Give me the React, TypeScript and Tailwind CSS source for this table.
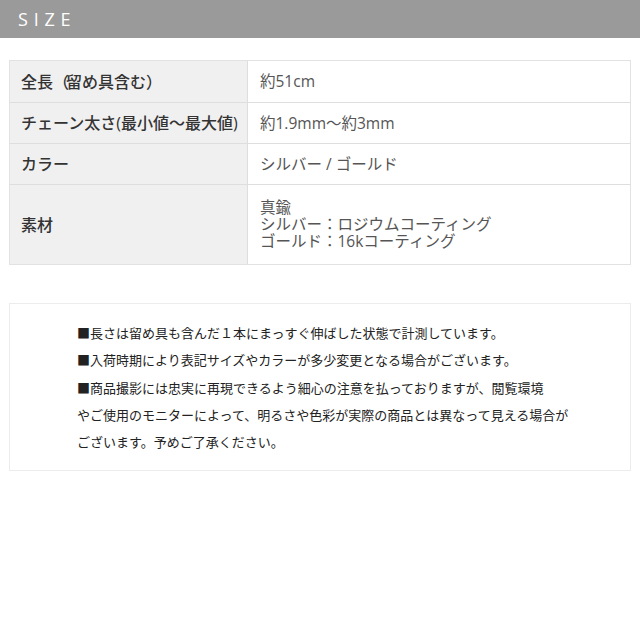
import type { ReactNode } from 'react';

const rows: { label: ReactNode; value: string[] }[] = [
  {
    label: (
      <>
        全長<span className="tracking-[-3px]">（</span>留め具含む<span className="tracking-[-3px]">）</span>
      </>
    ),
    value: ['約51cm'],
  },
  { label: 'チェーン太さ(最小値〜最大値)', value: ['約1.9mm〜約3mm'] },
  { label: 'カラー', value: ['シルバー / ゴールド'] },
  { label: '素材', value: ['真鍮', 'シルバー：ロジウムコーティング', 'ゴールド：16kコーティング'] },
];

const notes = [
  '■長さは留め具も含んだ１本にまっすぐ伸ばした状態で計測しています。',
  '■入荷時期により表記サイズやカラーが多少変更となる場合がございます。',
  '■商品撮影には忠実に再現できるよう細心の注意を払っておりますが、閲覧環境',
  'やご使用のモニターによって、明るさや色彩が実際の商品とは異なって見える場合が',
  'ございます。予めご了承ください。',
];

const App = () => {
  return (
    <div
      className="w-[640px] h-[640px] bg-white"
      style={{ fontFamily: '"Open Sans", "Noto Sans CJK JP", sans-serif' }}
    >
      {/* Header */}
      <div className="h-[38px] bg-[#9a9a9a] flex items-center pl-[18px]">
        <span className="text-white text-[18px] tracking-[0.32em]">SIZE</span>
      </div>

      {/* Spec table */}
      <div className="mx-[9px] mt-[22px] border border-[#e2e2e2]">
        {rows.map((r, i) => (
          <div
            key={i}
            className={`flex ${i > 0 ? 'border-t border-[#dedede]' : ''} ${i === 3 ? 'h-[80px]' : 'h-[41px]'}`}
          >
            <div className="w-[238px] shrink-0 bg-[#f0f0f0] border-r border-[#dedede] flex items-center pl-[11px] text-[16px] font-medium text-[#333] whitespace-nowrap">
              {r.label}
            </div>
            <div className="flex-1 flex flex-col justify-center pl-[12px] text-[15.5px] text-[#555] leading-[17px]">
              {r.value.map((v) => (
                <div key={v}>{v}</div>
              ))}
            </div>
          </div>
        ))}
      </div>

      {/* Notes */}
      <div className="mx-[9px] mt-[38px] h-[168px] border border-[#ececec] pl-[67px] pt-[15px]">
        {notes.map((n) => (
          <p
            key={n}
            className="text-[13px] leading-[27.3px] text-[#222] whitespace-nowrap"
            style={{ fontFamily: '"Noto Sans CJK JP", sans-serif' }}
          >
            {n}
          </p>
        ))}
      </div>
    </div>
  );
};

export default App;
